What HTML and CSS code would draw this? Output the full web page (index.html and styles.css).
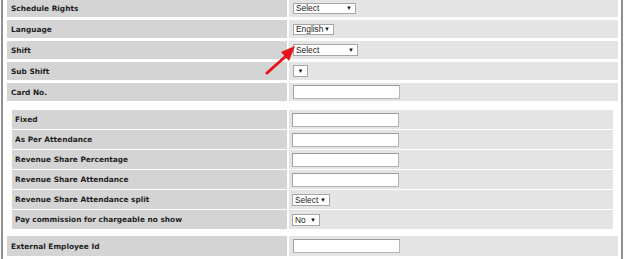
FILE: index.html
```html
<!DOCTYPE html>
<html lang="en">
<head>
    <meta charset="UTF-8">
    <title>Employee settings</title>
    <link rel="stylesheet" href="styles.css">
</head>
<body>
    <div class="panel">
        <div class="form">
            <div class="label">Schedule Rights</div>
            <div class="value"><span class="select w-sched">Select<i>&#9660;</i></span></div>

            <div class="label">Language</div>
            <div class="value"><span class="select w-lang">English<i>&#9660;</i></span></div>

            <div class="label">Shift</div>
            <div class="value"><span class="select w-shift">Select<i>&#9660;</i></span></div>

            <div class="label">Sub Shift</div>
            <div class="value"><span class="select w-sub"><i>&#9660;</i></span></div>

            <div class="label">Card No.</div>
            <div class="value"><input class="text" type="text"></div>

            <div class="group">
                <div class="form nested">
                    <div class="label">Fixed</div>
                    <div class="value"><input class="text" type="text"></div>

                    <div class="label">As Per Attendance</div>
                    <div class="value"><input class="text" type="text"></div>

                    <div class="label">Revenue Share Percentage</div>
                    <div class="value"><input class="text" type="text"></div>

                    <div class="label">Revenue Share Attendance</div>
                    <div class="value"><input class="text" type="text"></div>

                    <div class="label">Revenue Share Attendance split</div>
                    <div class="value"><span class="select w-split">Select<i>&#9660;</i></span></div>

                    <div class="label">Pay commission for chargeable no show</div>
                    <div class="value"><span class="select w-no">No<i>&#9660;</i></span></div>
                </div>
            </div>

            <div class="label">External Employee Id</div>
            <div class="value"><input class="text" type="text"></div>
        </div>

        <svg class="pointer" width="40" height="34" viewBox="0 0 40 34">
            <line x1="3" y1="30" x2="22" y2="13" stroke="#e8141b" stroke-width="3" stroke-linecap="round"/>
            <polygon points="31,3 17,9 25,18" fill="#e8141b"/>
        </svg>
    </div>
</body>
</html>
```

FILE: styles.css
```css
body {
    margin: 0;
    background: #fff;
}

.panel {
    position: relative;
    width: 611px;
    margin: -1px 0 0 1px;
    padding: 0 3px 4px 4px;
    border-left: 2px solid #8e8e8e;
    border-right: 2px solid #8e8e8e;
}

/* outer form: label column + value column */
.form {
    display: grid;
    grid-template-columns: 280px 329px;
    grid-template-rows: repeat(5, 18px) auto 20px;
    column-gap: 2px;
    row-gap: 3px;
}

.group {
    grid-column: 1 / -1;
    padding: 6px 5px 4px 5px;
}

.nested {
    grid-template-columns: 275px 324px;
    grid-template-rows: none;
    grid-auto-rows: 19px;
    row-gap: 1px;
}

.label {
    display: flex;
    align-items: center;
    padding-left: 4px;
    background: #d4d4d4;
    font-family: "DejaVu Sans", Verdana, sans-serif;
    font-weight: bold;
    font-size: 7.4px;
    color: #1e1e1e;
}

.value {
    display: flex;
    align-items: center;
    padding-left: 4px;
    background: #e4e4e4;
}

.nested .label,
.nested .value {
    padding-left: 3px;
}

.select {
    box-sizing: border-box;
    display: flex;
    align-items: center;
    justify-content: space-between;
    height: 11px;
    padding: 0 3px 0 2px;
    border: 1px solid #a6a6a6;
    background: #fff;
    font-family: "Liberation Sans", Arial, sans-serif;
    font-size: 8.4px;
    color: #222;
}

.select i {
    font-style: normal;
    font-size: 6px;
    color: #111;
}

.w-sched { width: 63px; }
.w-lang  { width: 41px; }
.w-shift { width: 65px; height: 12px; }
.w-sub   { width: 15px; height: 12px; justify-content: center; padding: 0; }
.w-split { width: 38px; height: 12px; }
.w-no    { width: 28px; height: 12px; }

.text {
    box-sizing: border-box;
    width: 107px;
    height: 14px;
    margin: 0;
    border: 1px solid #b4b4b4;
    border-top-color: #9a9a9a;
    border-left-color: #a4a4a4;
    background: #fff;
}

/* red annotation arrow pointing at the Shift select */
.pointer {
    position: absolute;
    left: 261px;
    top: 44px;
}
```
